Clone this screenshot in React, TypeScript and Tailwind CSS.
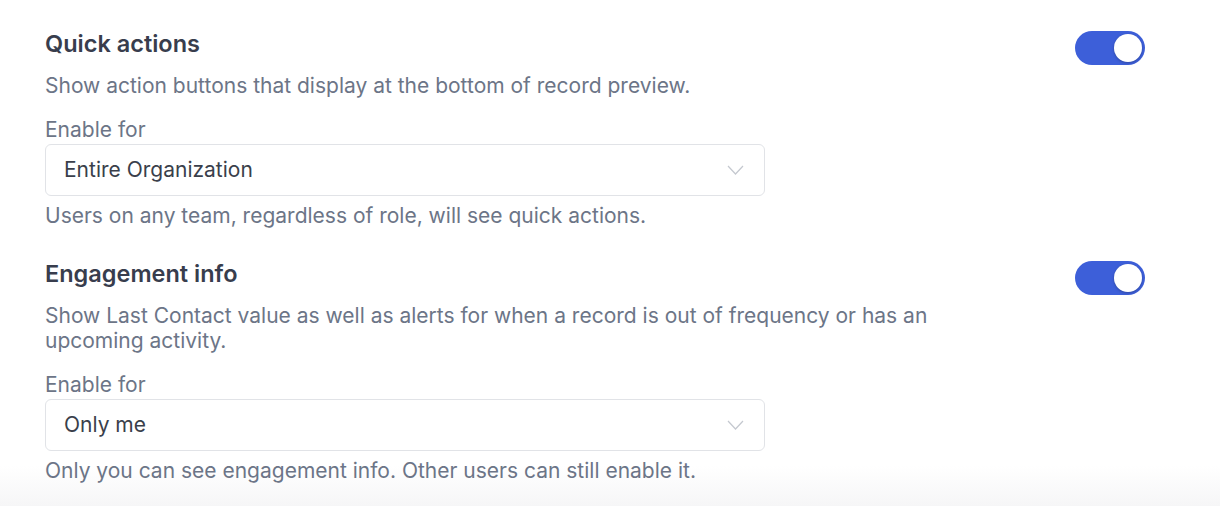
import React, { useState } from 'react';

const font = { fontFamily: 'Inter, Roboto, "Liberation Sans", sans-serif' };

const Toggle = ({ on, onChange }: { on: boolean; onChange: () => void }) => (
  <button
    onClick={onChange}
    className={`relative flex h-[34px] w-[70px] shrink-0 items-center rounded-full px-[3px] ${on ? 'justify-end bg-[#3d5fd9]' : 'justify-start bg-[#cfd4dc]'}`}
  >
    <span className="h-[28px] w-[28px] rounded-full bg-white shadow-[0_1px_3px_rgba(0,0,0,0.25)]" />
  </button>
);

const Select = ({ value }: { value: string }) => (
  <div className="flex h-[52px] w-[720px] items-center justify-between rounded-md border border-[#e1e3e7] bg-white pl-[18px] pr-[20px]">
    <span className="text-[21px] text-[#3a3f4b]">{value}</span>
    <svg width="17" height="10" viewBox="0 0 17 10" fill="none">
      <path d="M1 1l7.5 8L16 1" stroke="#c4c8cf" strokeWidth="1.2" />
    </svg>
  </div>
);

interface SectionProps {
  title: string;
  description: string;
  value: string;
  helper: string;
}

const Section = ({ title, description, value, helper }: SectionProps) => {
  const [on, setOn] = useState(true);
  return (
    <div className="flex items-start justify-between">
      <div className="flex flex-col">
        <h2 className="text-[23.5px] font-semibold leading-[30px] text-[#383d4d]">{title}</h2>
        <p className="mt-[14px] max-w-[885px] text-[21px] leading-[25px] text-[#6c7587]">{description}</p>
        <div className="mt-[19px] text-[21px] leading-[25px] text-[#6c7587]">Enable for</div>
        <div className="mt-[2px]">
          <Select value={value} />
        </div>
        <p className="mt-[7px] text-[21px] leading-[25px] text-[#6c7587]">{helper}</p>
      </div>
      <div className="mt-[2px]">
        <Toggle on={on} onChange={() => setOn(!on)} />
      </div>
    </div>
  );
};

export default function App() {
  return (
    <div style={font} className="h-[506px] w-full bg-gradient-to-b from-white from-[92%] to-[#f6f6f7] pl-[45px] pr-[75px] pt-[29px]">
      <div className="flex flex-col gap-[31px]">
        <Section
          title="Quick actions"
          description="Show action buttons that display at the bottom of record preview."
          value="Entire Organization"
          helper="Users on any team, regardless of role, will see quick actions."
        />
        <Section
          title="Engagement info"
          description="Show Last Contact value as well as alerts for when a record is out of frequency or has an upcoming activity."
          value="Only me"
          helper="Only you can see engagement info. Other users can still enable it."
        />
      </div>
    </div>
  );
}
